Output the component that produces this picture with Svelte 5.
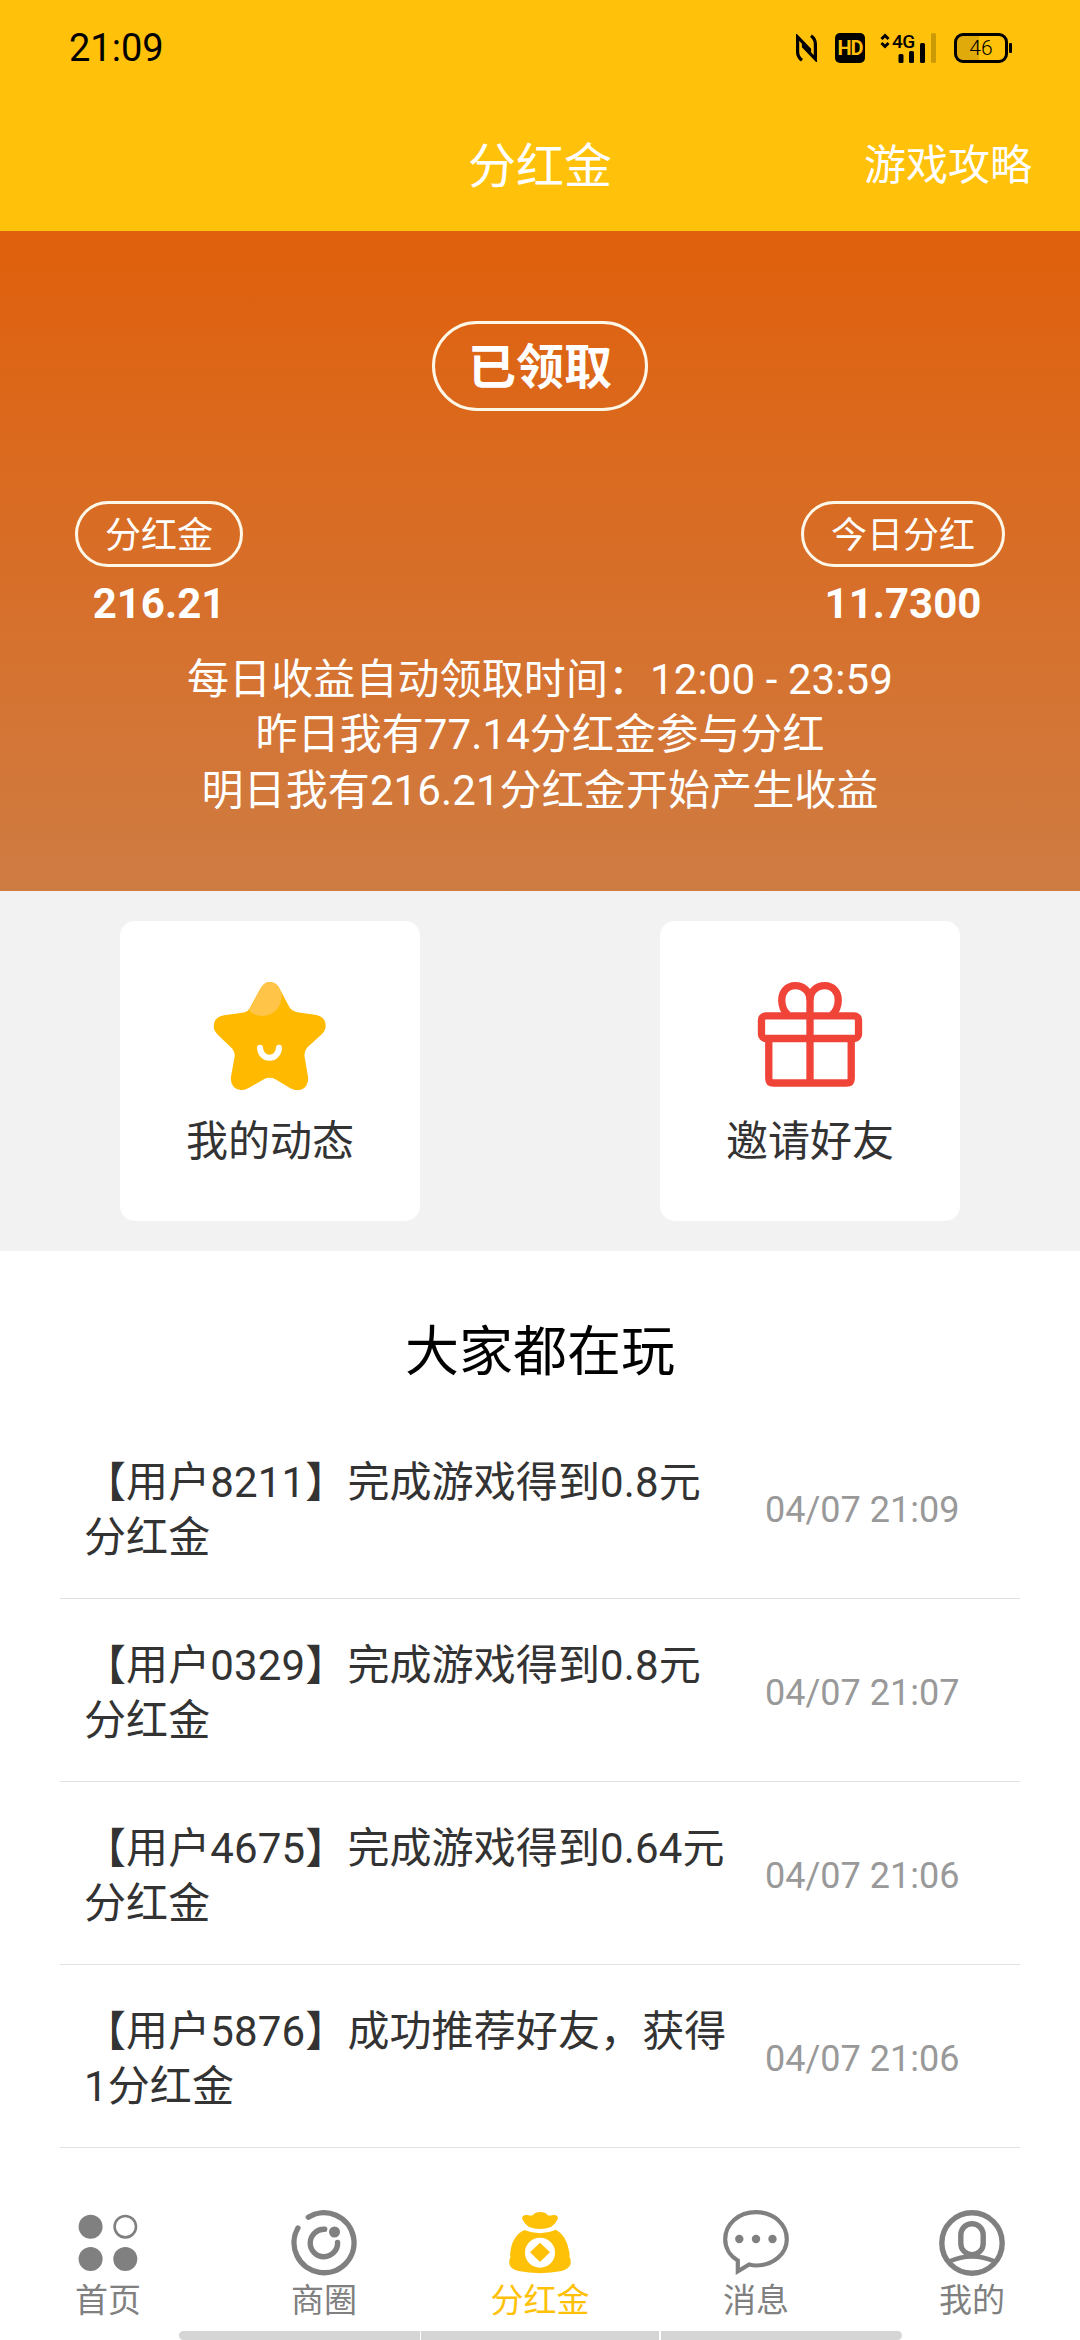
<script lang="ts">
	interface Activity {
		user: string;
		text: string;
		time: string;
	}

	interface Tab {
		icon: string;
		label: string;
		active?: boolean;
	}

	const notes = [
		'每日收益自动领取时间：12:00 - 23:59',
		'昨日我有77.14分红金参与分红',
		'明日我有216.21分红金开始产生收益'
	];

	const activities: Activity[] = [
		{ user: '用户8211', text: '完成游戏得到0.8元分红金', time: '04/07 21:09' },
		{ user: '用户0329', text: '完成游戏得到0.8元分红金', time: '04/07 21:07' },
		{ user: '用户4675', text: '完成游戏得到0.64元分红金', time: '04/07 21:06' },
		{ user: '用户5876', text: '成功推荐好友，获得1分红金', time: '04/07 21:06' }
	];

	const tabs: Tab[] = [
		{ icon: 'home', label: '首页' },
		{ icon: 'circle', label: '商圈' },
		{ icon: 'bag', label: '分红金', active: true },
		{ icon: 'message', label: '消息' },
		{ icon: 'user', label: '我的' }
	];
</script>

<div class="screen">
	<header>
		<div class="status">
			<span class="clock">21:09</span>
			<svg class="nfc" viewBox="0 0 21 28" width="21" height="28">
				<path d="M6 26.3Q1.6 23 1.6 18V3L13.5 15.5V19.5" />
				<path d="M15 1.7Q19.4 5 19.4 10V25L7.5 12.5V8.5" />
			</svg>
			<span class="hd">HD</span>
			<svg class="signal" viewBox="0 -8 57 46" width="57" height="46">
				<path class="arrows" d="M1.5 6L5 2.5L8.5 6M1.5 10L5 13.5L8.5 10" />
				<text x="12" y="14.5">4G</text>
				<rect x="18.5" y="21" width="5" height="9" rx="1.5" />
				<rect x="29" y="18" width="5" height="12" rx="1.5" />
				<rect x="40" y="10" width="5" height="20" rx="1.5" />
				<rect class="off" x="51" y="0" width="5" height="30" rx="1.5" />
			</svg>
			<div class="battery"><span>46</span></div>
			<i class="battery-cap"></i>
		</div>
		<div class="navbar">
			<h1>分红金</h1>
			<span class="guide">游戏攻略</span>
		</div>
	</header>

	<section class="hero">
		<div class="claimed">已领取</div>
		<div class="totals">
			<div class="total">
				<span class="pill">分红金</span>
				<strong>216.21</strong>
			</div>
			<div class="total">
				<span class="pill">今日分红</span>
				<strong>11.7300</strong>
			</div>
		</div>
		<div class="notes">
			{#each notes as note}
				<p>{note}</p>
			{/each}
		</div>
	</section>

	<section class="cards">
		<div class="card">
			<svg viewBox="330 240 360 340" width="120" height="113">
				<defs>
					<clipPath id="star">
						<path
							d="M480 268Q492 246 508 246Q528 246 538 264L565 315Q573 333 592 337L650 345Q677 351 678 379Q677 392 664 405L622 443Q612 455 614 470L625 535Q624 570 592 572Q583 572 570 565L525 538Q509 530 493 538L447 564Q436 571 424 572Q392 568 392 535L404 468Q404 455 396 446L352 404Q340 392 340 378Q343 350 372 346L432 338Q444 335 449 325Z"
						/>
					</clipPath>
				</defs>
				<g clip-path="url(#star)">
					<rect x="330" y="240" width="360" height="340" fill="#ffba00" />
					<circle cx="487" cy="290" r="58" fill="#ffc448" />
				</g>
				<path
					d="M480 444A28.5 30 0 0 0 537 444"
					fill="none"
					stroke="#fff"
					stroke-width="18"
					stroke-linecap="round"
				/>
			</svg>
			<span>我的动态</span>
		</div>
		<div class="card">
			<svg class="gift" viewBox="330 240 360 340" width="120" height="113">
				<rect x="364" y="348" width="292" height="68" rx="13" />
				<path d="M386 416V536Q386 550 400 550H620Q634 550 634 536V416" />
				<path d="M510 550V300C510 275 490 257 466 257C440 257 425 277 425 300C425 320 432 335 444 345" />
				<path d="M510 300C510 275 530 257 554 257C580 257 595 277 595 300C595 320 588 335 576 345" />
			</svg>
			<span>邀请好友</span>
		</div>
	</section>

	<section class="feed">
		<h2>大家都在玩</h2>
		{#each activities as item}
			<div class="row">
				<p>【{item.user}】{item.text}</p>
				<time>{item.time}</time>
			</div>
		{/each}
	</section>

	<nav>
		{#each tabs as tab}
			<div class="tab" class:active={tab.active}>
				{#if tab.icon === 'home'}
					<svg viewBox="0 0 66 66" fill="currentColor">
						<circle cx="15.6" cy="16.7" r="12" />
						<circle cx="50.3" cy="16.7" r="10.7" fill="none" stroke="currentColor" stroke-width="2.6" />
						<circle cx="15.6" cy="49" r="12" />
						<circle cx="50.3" cy="49" r="12" />
					</svg>
				{:else if tab.icon === 'circle'}
					<svg viewBox="0 0 66 66" class="line">
						<path d="M17.3 7.2A30 30 0 1 1 6.9 18" />
						<path d="M33.7 19.3A13.7 13.7 0 1 0 46.6 32.5" />
						<circle cx="43.5" cy="22" r="5.5" fill="currentColor" stroke="none" />
					</svg>
				{:else if tab.icon === 'bag'}
					<svg viewBox="81 60 198 198" fill="currentColor">
						<path
							d="M126 84Q128 74 142 75Q152 78 158 76Q166 66 181 66Q196 66 203 76Q210 78 220 75Q232 73 234 84Q230 98 213 111Q180 123 147 111Q130 98 126 84Z"
						/>
						<path
							d="M133 120Q180 140 228 119Q258 135 267 182L269 194L268 200L271 206Q273 213 272 222Q268 236 245 243Q180 256 115 243Q90 236 88 222Q87 212 90 204L92 199L90 195Q94 138 133 120Z"
						/>
						<circle cx="180" cy="188" r="45" fill="#fff" />
						<path d="M180 158L210 187L180 216L150 187Z" />
					</svg>
				{:else if tab.icon === 'message'}
					<svg viewBox="0 0 66 66">
						<path
							d="M14.8 50.5C7 46 2.2 38 2.2 29.5C2.2 14 15.5 2.2 33 2.2C50.5 2.2 63.8 14 63.8 29.5C63.8 44 50 55.5 33 55.5C30.5 55.5 28 55 26.2 54.5L14.8 61.3Z"
							fill="none"
							stroke="currentColor"
							stroke-width="4.2"
						/>
						<g fill="currentColor">
							<circle cx="16.3" cy="29" r="4.2" />
							<circle cx="33" cy="29" r="4.2" />
							<circle cx="49.5" cy="29" r="4.2" />
						</g>
					</svg>
				{:else}
					<svg viewBox="0 0 66 66" class="line">
						<circle cx="33" cy="33" r="30.2" />
						<rect x="21.8" y="13.7" width="22.4" height="31" rx="11.2" />
						<path d="M10 51.5Q33 41.5 56 51.5" stroke-width="4.6" stroke-linecap="butt" />
					</svg>
				{/if}
				<span>{tab.label}</span>
			</div>
		{/each}
	</nav>
	<div class="gesture"><i></i><i></i><i></i></div>
</div>

<style>
	:global(body) {
		margin: 0;
		background: #fff;
	}

	.screen {
		display: flex;
		flex-direction: column;
		width: 1080px;
		height: 2340px;
		overflow: hidden;
		background: #fff;
		font-family: Roboto, 'Noto Sans CJK SC', sans-serif;
		color: #333;
	}

	h1,
	h2,
	p {
		margin: 0;
		font-weight: 400;
	}

	header {
		height: 231px;
		background: #ffc109;
	}

	.status {
		display: flex;
		align-items: center;
		height: 96px;
		padding: 0 69px;
		color: #000;
	}

	.clock {
		margin-right: auto;
		font-size: 38px;
	}

	.nfc {
		margin-right: 18px;
		fill: none;
		stroke: #000;
		stroke-width: 3.2;
	}

	.hd {
		width: 30px;
		height: 30px;
		margin-right: 15px;
		border-radius: 5px;
		background: #000;
		color: #ffc109;
		font-size: 20px;
		font-weight: 700;
		line-height: 30px;
		text-align: center;
		letter-spacing: -1px;
	}

	.signal {
		margin-right: 17px;
	}

	.signal text {
		font-size: 19px;
		font-weight: 500;
		letter-spacing: -0.5px;
	}

	.arrows {
		fill: none;
		stroke: #000;
		stroke-width: 3;
	}

	.off {
		opacity: 0.2;
	}

	.battery {
		box-sizing: border-box;
		width: 54px;
		height: 30px;
		border: 3px solid #000;
		border-radius: 9px;
		background: linear-gradient(90deg, #e0aa0a 46%, transparent 46%);
		font-size: 21px;
		font-weight: 300;
		line-height: 25px;
		text-align: center;
	}

	.battery-cap {
		width: 3px;
		height: 10px;
		margin: 0 -1px 0 1px;
		border-radius: 1px;
		background: #000;
	}

	.navbar {
		display: grid;
		grid-template-columns: 1fr auto 1fr;
		align-items: center;
		box-sizing: border-box;
		height: 135px;
		padding: 0 48px 4px;
		color: #fff;
	}

	h1 {
		grid-column: 2;
		font-size: 48px;
	}

	.guide {
		justify-self: end;
		font-size: 42px;
	}

	.hero {
		display: flex;
		flex-direction: column;
		align-items: center;
		box-sizing: border-box;
		height: 660px;
		padding-top: 90px;
		background: linear-gradient(#e0600c, #cf7c43);
		color: #fff;
	}

	.claimed {
		box-sizing: border-box;
		height: 90px;
		padding: 0 33px;
		border: 3px solid #fff8e8;
		border-radius: 45px;
		font-size: 48px;
		font-weight: 700;
		line-height: 88px;
	}

	.totals {
		display: flex;
		justify-content: space-between;
		box-sizing: border-box;
		width: 100%;
		margin-top: 90px;
		padding: 0 75px;
	}

	.total {
		display: flex;
		flex-direction: column;
		align-items: center;
	}

	.pill {
		box-sizing: border-box;
		height: 66px;
		padding: 0 27px;
		border: 3px solid #fff8e8;
		border-radius: 33px;
		font-size: 36px;
		line-height: 64px;
	}

	strong {
		margin-top: 9px;
		font-size: 42px;
		line-height: 56px;
	}

	.notes {
		margin-top: 20px;
		font-size: 42px;
		line-height: 55.4px;
		text-align: center;
		letter-spacing: 0.1px;
	}

	.cards {
		display: flex;
		justify-content: space-around;
		align-items: center;
		height: 360px;
		background: #f2f2f2;
	}

	.card {
		display: flex;
		flex-direction: column;
		align-items: center;
		box-sizing: border-box;
		width: 300px;
		height: 300px;
		margin: 0 120px;
		padding-top: 59px;
		border-radius: 15px;
		background: #fff;
		font-size: 42px;
	}

	.card span {
		margin-top: 19px;
		line-height: 60px;
	}

	.gift {
		fill: none;
		stroke: #f04438;
		stroke-width: 22;
	}

	.feed {
		padding: 0 60px;
	}

	h2 {
		height: 165px;
		font-size: 54px;
		line-height: 204px;
		color: #000;
		text-align: center;
	}

	.row {
		display: flex;
		align-items: center;
		box-sizing: border-box;
		height: 183px;
		padding: 5px 24px 0;
		border-bottom: 1px solid #e2e2e2;
	}

	.row p {
		width: 654px;
		font-size: 42px;
		line-height: 55px;
		letter-spacing: 0.12px;
	}

	time {
		margin-left: 27px;
		font-size: 36px;
		color: #999;
	}

	nav {
		display: grid;
		grid-template-columns: repeat(5, 1fr);
		margin-top: auto;
	}

	.tab {
		display: flex;
		flex-direction: column;
		align-items: center;
		height: 121px;
		color: #808080;
	}

	.tab.active {
		color: #ffc107;
	}

	.tab svg {
		width: 66px;
		height: 66px;
	}

	.tab span {
		font-size: 33px;
		line-height: 49px;
	}

	.line {
		fill: none;
		stroke: currentColor;
		stroke-width: 5.4;
		stroke-linecap: round;
	}

	.gesture {
		display: grid;
		grid-template-columns: 241px 238px 241px;
		gap: 1.5px;
		align-self: center;
		height: 9px;
		border-radius: 5px;
		overflow: hidden;
	}

	.gesture i {
		background: #d5d5d5;
	}
</style>
